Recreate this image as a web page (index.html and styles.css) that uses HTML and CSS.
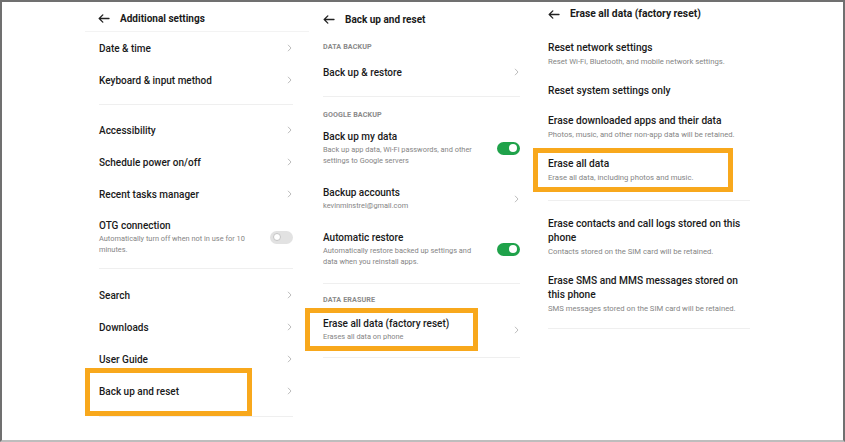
FILE: index.html
```html
<!DOCTYPE html>
<html>
<head>
<meta charset="utf-8">
<link rel="stylesheet" href="styles.css">
</head>
<body>
<div class="frame">
  <!-- Panel 1 -->
  <section class="panel p1">
    <div class="header">
      <svg class="back" width="12" height="9" viewBox="0 0 12 9"><path d="M11 4.5H1.2M4.8 0.9L1.2 4.5L4.8 8.1" fill="none" stroke="#222" stroke-width="1.3" stroke-linecap="round" stroke-linejoin="round"/></svg>
      <span class="htitle">Additional settings</span>
    </div>
    <div class="row single"><span class="title">Date &amp; time</span><svg class="chev" width="5" height="8" viewBox="0 0 5 8"><path d="M1 0.8L4 4L1 7.2" fill="none" stroke="#bdbdbd" stroke-width="1"/></svg></div>
    <div class="row single"><span class="title">Keyboard &amp; input method</span><svg class="chev" width="5" height="8" viewBox="0 0 5 8"><path d="M1 0.8L4 4L1 7.2" fill="none" stroke="#bdbdbd" stroke-width="1"/></svg></div>
    <div class="sep s1a"></div>
    <div class="row single"><span class="title">Accessibility</span><svg class="chev" width="5" height="8" viewBox="0 0 5 8"><path d="M1 0.8L4 4L1 7.2" fill="none" stroke="#bdbdbd" stroke-width="1"/></svg></div>
    <div class="row single"><span class="title">Schedule power on/off</span><svg class="chev" width="5" height="8" viewBox="0 0 5 8"><path d="M1 0.8L4 4L1 7.2" fill="none" stroke="#bdbdbd" stroke-width="1"/></svg></div>
    <div class="row single"><span class="title">Recent tasks manager</span><svg class="chev" width="5" height="8" viewBox="0 0 5 8"><path d="M1 0.8L4 4L1 7.2" fill="none" stroke="#bdbdbd" stroke-width="1"/></svg></div>
    <div class="row multi otg">
      <div class="text">
        <div class="title">OTG connection</div>
        <div class="sub">Automatically turn off when not in use for 10 minutes.</div>
      </div>
      <span class="toggle off"><span class="knob"></span></span>
    </div>
    <div class="sep s1b"></div>
    <div class="row single"><span class="title">Search</span><svg class="chev" width="5" height="8" viewBox="0 0 5 8"><path d="M1 0.8L4 4L1 7.2" fill="none" stroke="#bdbdbd" stroke-width="1"/></svg></div>
    <div class="row single"><span class="title">Downloads</span><svg class="chev" width="5" height="8" viewBox="0 0 5 8"><path d="M1 0.8L4 4L1 7.2" fill="none" stroke="#bdbdbd" stroke-width="1"/></svg></div>
    <div class="row single"><span class="title">User Guide</span><svg class="chev" width="5" height="8" viewBox="0 0 5 8"><path d="M1 0.8L4 4L1 7.2" fill="none" stroke="#bdbdbd" stroke-width="1"/></svg></div>
    <div class="row single hl"><span class="title">Back up and reset</span><svg class="chev" width="5" height="8" viewBox="0 0 5 8"><path d="M1 0.8L4 4L1 7.2" fill="none" stroke="#bdbdbd" stroke-width="1"/></svg><span class="mark m1"></span></div>
    <div class="sep s1c"></div>
  </section>

  <!-- Panel 2 -->
  <section class="panel p2">
    <div class="header">
      <svg class="back" width="12" height="9" viewBox="0 0 12 9"><path d="M11 4.5H1.2M4.8 0.9L1.2 4.5L4.8 8.1" fill="none" stroke="#222" stroke-width="1.3" stroke-linecap="round" stroke-linejoin="round"/></svg>
      <span class="htitle">Back up and reset</span>
    </div>
    <div class="label l1">DATA BACKUP</div>
    <div class="row single"><span class="title">Back up &amp; restore</span><svg class="chev" width="5" height="8" viewBox="0 0 5 8"><path d="M1 0.8L4 4L1 7.2" fill="none" stroke="#bdbdbd" stroke-width="1"/></svg></div>
    <div class="sep s2a"></div>
    <div class="label l2">GOOGLE BACKUP</div>
    <div class="row multi r-my">
      <div class="text">
        <div class="title">Back up my data</div>
        <div class="sub">Back up app data, Wi-Fi passwords, and other settings to Google servers</div>
      </div>
      <span class="toggle on"><span class="knob"></span></span>
    </div>
    <div class="row multi r-acc">
      <div class="text">
        <div class="title">Backup accounts</div>
        <div class="sub">kevinminstrel@gmail.com</div>
      </div>
      <svg class="chev" width="5" height="8" viewBox="0 0 5 8"><path d="M1 0.8L4 4L1 7.2" fill="none" stroke="#bdbdbd" stroke-width="1"/></svg>
    </div>
    <div class="row multi r-auto">
      <div class="text">
        <div class="title">Automatic restore</div>
        <div class="sub">Automatically restore backed up settings and data when you reinstall apps.</div>
      </div>
      <span class="toggle on"><span class="knob"></span></span>
    </div>
    <div class="sep s2b"></div>
    <div class="label l3">DATA ERASURE</div>
    <div class="row multi r-erase hl">
      <div class="text">
        <div class="title">Erase all data (factory reset)</div>
        <div class="sub">Erases all data on phone</div>
      </div>
      <svg class="chev" width="5" height="8" viewBox="0 0 5 8"><path d="M1 0.8L4 4L1 7.2" fill="none" stroke="#bdbdbd" stroke-width="1"/></svg>
      <span class="mark m2"></span>
    </div>
    <div class="sep s2c"></div>
  </section>

  <!-- Panel 3 -->
  <section class="panel p3">
    <div class="header h3">
      <svg class="back" width="12" height="9" viewBox="0 0 12 9"><path d="M11 4.5H1.2M4.8 0.9L1.2 4.5L4.8 8.1" fill="none" stroke="#222" stroke-width="1.3" stroke-linecap="round" stroke-linejoin="round"/></svg>
      <span class="htitle">Erase all data (factory reset)</span>
    </div>
    <div class="item">
      <div class="title">Reset network settings</div>
      <div class="sub">Reset Wi-Fi, Bluetooth, and mobile network settings.</div>
    </div>
    <div class="item">
      <div class="title">Reset system settings only</div>
    </div>
    <div class="item">
      <div class="title">Erase downloaded apps and their data</div>
      <div class="sub">Photos, music, and other non-app data will be retained.</div>
    </div>
    <div class="item hl">
      <div class="title">Erase all data</div>
      <div class="sub">Erase all data, including photos and music.</div>
      <span class="mark m3"></span>
    </div>
    <div class="sep s3a"></div>
    <div class="item">
      <div class="title">Erase contacts and call logs stored on this phone</div>
      <div class="sub">Contacts stored on the SIM card will be retained.</div>
    </div>
    <div class="item">
      <div class="title">Erase SMS and MMS messages stored on this phone</div>
      <div class="sub">SMS messages stored on the SIM card will be retained.</div>
    </div>
    <div class="sep s3b"></div>
  </section>
</div>
</body>
</html>
```
FILE: styles.css
```css
* { box-sizing: border-box; }
html, body { margin: 0; padding: 0; background: #fff; }
body { font-family: Roboto, "Liberation Sans", Arial, sans-serif; color: #1c1c1c; }

.frame {
  width: 845px;
  height: 442px;
  border-top: 2px solid #707070;
  border-left: 2px solid #707070;
  border-right: 2px solid #707070;
  border-bottom: 2px solid #bdbdbd;
  display: flex;
  align-items: flex-start;
  padding-left: 83px;
  background: #fff;
  overflow: hidden;
}

.panel { display: flex; flex-direction: column; padding: 0 14px; }
.p1 { width: 224px; padding-right: 16px; }
.p2 { width: 225px; }
.p3 { width: 230px; }

.header {
  height: 30px;
  display: flex;
  align-items: center;
  padding-top: 4px;
  gap: 10px;
}
.p1 .header { border-bottom: 1px solid #f3f3f3; margin: 0 -16px 0 -14px; padding-left: 13px; }
.back { flex: none; }
.htitle { font-size: 10px; font-weight: 700; color: #1a1a1a; }
.h3 { height: 31px; align-items: flex-start; padding-top: 5px; }
.h3 .back { margin-top: 2.5px; }
.h3 .htitle { line-height: 14px; font-size: 10.3px; }

.row {
  position: relative;
  display: flex;
  align-items: center;
  justify-content: space-between;
}
.row.single { height: 32px; }
.title { font-size: 10px; font-weight: 500; line-height: 13px; color: #1a1a1a; }
.sub { font-size: 7.4px; line-height: 11px; color: #858585; margin-top: 1px; }
.chev { flex: none; margin-right: 1px; }

.otg .text { width: 168px; }
.p2 .text { width: 155px; }
.otg { padding: 9px 0 5px; }
.r-my { padding: 8px 0 10px; }
.r-acc { padding: 10px 0 10px; }
.r-auto { padding: 10px 0 8px; }
.r-erase { padding: 10px 0 8px; }

.sep { height: 1px; background: #efefef; }
.s1a { margin: 8px 0 9px; }
.s1b { margin: 8px 0 10px; }
.s1c { margin-top: 9px; }
.s2a { margin: 8px 0 9px; }
.s2b { margin: 8px 0 9px; }
.s2c { margin-top: 7px; }
.s3a { margin: 8px 0 8px; }
.s3b { margin-top: 5px; }

.label {
  font-size: 7.2px;
  font-weight: 700;
  line-height: 14px;
  color: #8a8a8a;
  letter-spacing: 0.1px;
}
.l1 { padding: 8px 0 2px; }
.l2 { padding-top: 2px; }

.toggle {
  flex: none;
  position: relative;
  width: 23px;
  height: 13px;
  border-radius: 7px;
}
.toggle.on { background: #1fa24a; }
.toggle.off { background: #e2e2e2; }
.knob {
  position: absolute;
  top: 2.5px;
  width: 8px;
  height: 8px;
  border-radius: 50%;
  background: #fff;
}
.on .knob { right: 3px; }
.off .knob { left: 3px; border: 1.5px solid #c4c4c4; }

.item { position: relative; padding: 8px 0; }
.item .title { line-height: 14px; font-size: 10.2px; }
.item .sub { line-height: 12px; font-size: 7.7px; }

.mark {
  position: absolute;
  border: 5px solid #f8a81c;
  pointer-events: none;
}
.m1 { left: -14px; top: -7px; width: 167px; height: 48px; }
.m2 { left: -18px; top: 1px; width: 173px; height: 43px; }
.m3 { left: -15px; top: -1px; width: 200px; height: 44px; }
```
